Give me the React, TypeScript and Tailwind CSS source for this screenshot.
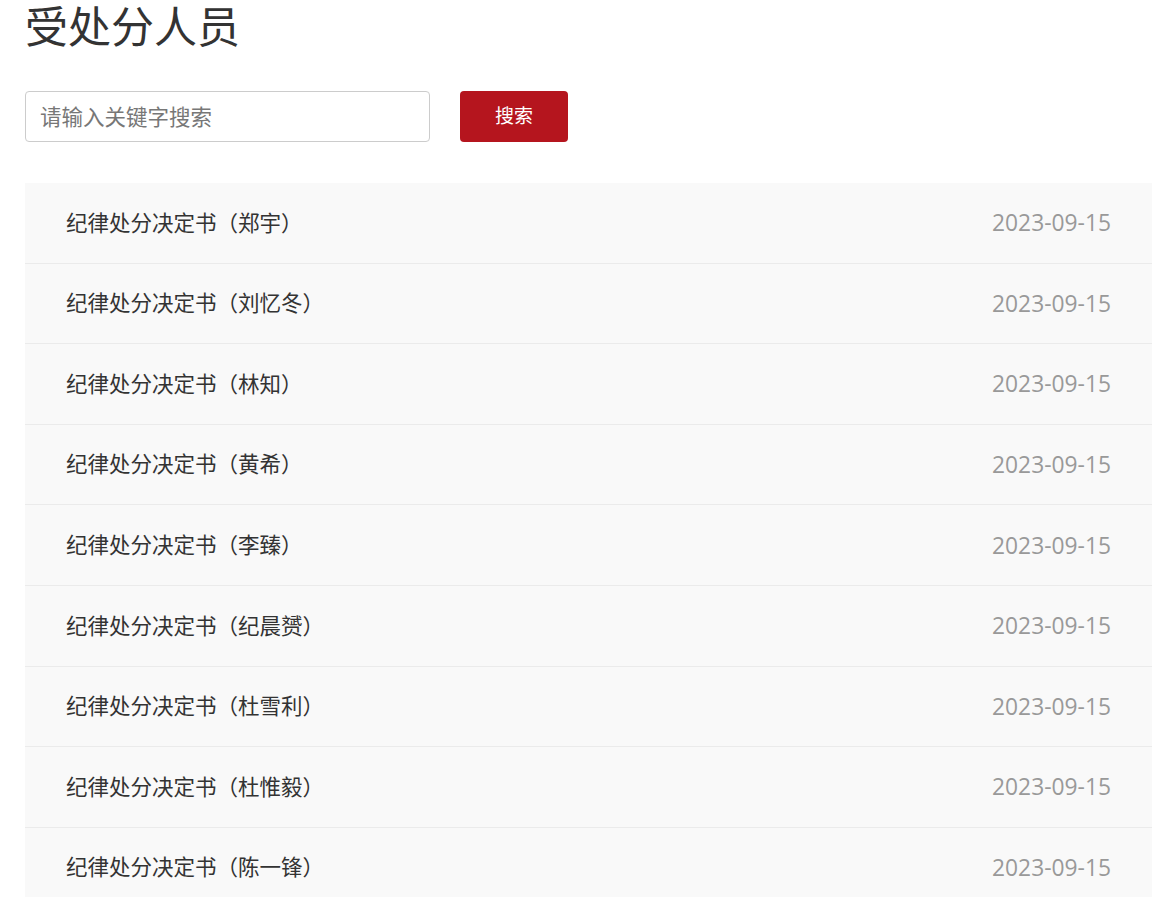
import React from "react";

const names = ["郑宇", "刘忆冬", "林知", "黄希", "李臻", "纪晨赟", "杜雪利", "杜惟毅", "陈一锋"];

export default function App() {
  return (
    <div
      className="min-h-screen bg-white pl-[25px] overflow-hidden"
      style={{ fontFamily: '"Open Sans", "Noto Sans CJK SC", sans-serif' }}
    >
      <h1 className="text-[43px] leading-[54px] text-[#333] font-normal">受处分人员</h1>
      <div className="mt-[37px] flex items-center gap-[30px]">
        <input
          className="w-[405px] h-[51px] border border-[#ccc] rounded-[4px] px-[14px] text-[21.5px] text-[#333] placeholder:text-[#777] outline-none"
          placeholder="请输入关键字搜索"
        />
        <button className="w-[108px] h-[51px] rounded-[4px] bg-[#b5151e] text-white text-[19px]">搜索</button>
      </div>
      <ul className="mt-[41px] w-[1127px]">
        {names.map((n) => (
          <li
            key={n}
            className="h-[80.6px] bg-[#f9f9f9] border-b border-[#ebebeb] flex items-center justify-between px-[41px]"
          >
            <span className="text-[21.5px] text-[#333]">纪律处分决定书（{n}）</span>
            <span className="text-[22.8px] text-[#999] pt-[1px]">2023-09-15</span>
          </li>
        ))}
      </ul>
    </div>
  );
}
